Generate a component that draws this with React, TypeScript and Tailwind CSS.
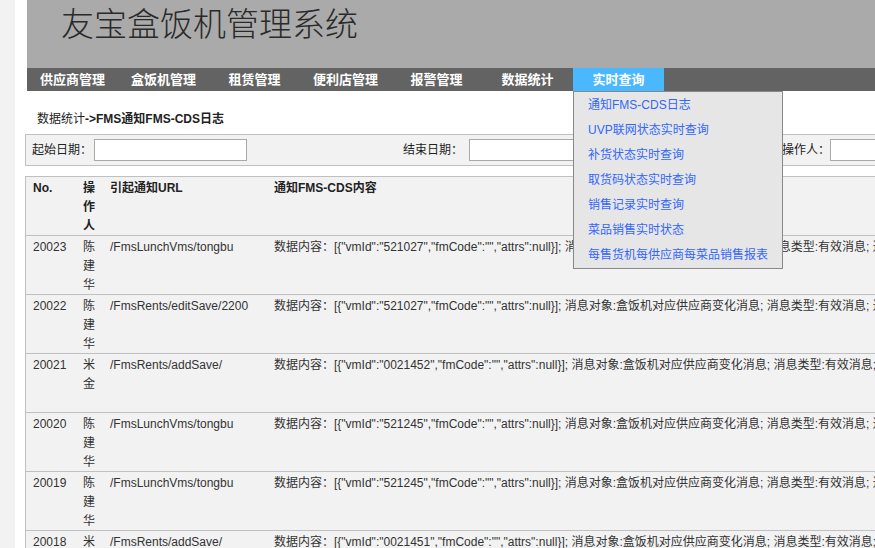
import React from "react";

const navItems = ["供应商管理", "盒饭机管理", "租赁管理", "便利店管理", "报警管理", "数据统计", "实时查询"];

const menuItems = [
  "通知FMS-CDS日志",
  "UVP联网状态实时查询",
  "补货状态实时查询",
  "取货码状态实时查询",
  "销售记录实时查询",
  "菜品销售实时状态",
  "每售货机每供应商每菜品销售报表",
];

const rows = [
  { no: "20023", op: "陈建华", url: "/FmsLunchVms/tongbu", vm: "521027" },
  { no: "20022", op: "陈建华", url: "/FmsRents/editSave/2200", vm: "521027" },
  { no: "20021", op: "米金", url: "/FmsRents/addSave/", vm: "0021452" },
  { no: "20020", op: "陈建华", url: "/FmsLunchVms/tongbu", vm: "521245" },
  { no: "20019", op: "陈建华", url: "/FmsLunchVms/tongbu", vm: "521245" },
  { no: "20018", op: "米金", url: "/FmsRents/addSave/", vm: "0021451" },
];

const font = { fontFamily: '"Liberation Sans", "Noto Sans CJK SC", sans-serif' };

export default function App() {
  return (
    <div className="w-[875px] h-[548px] overflow-hidden flex bg-white text-[#333]" style={font}>
      {/* left strip */}
      <div className="w-[15px] shrink-0 bg-[#f2f2f2]" />

      <div className="w-[1140px] shrink-0 pl-[10px]">
        <div className="relative">
          {/* header */}
          <div className="ml-[2px] h-[68px] bg-[#aaaaaa] pl-[34px] pt-[8px]">
            <h1 className="text-[33px] leading-none font-light text-[#2a2a2a]">友宝盒饭机管理系统</h1>
          </div>
          <div className="ml-[2px] h-[23px] bg-[#636363] flex">
            {navItems.map((n, i) => (
              <div
                key={n}
                className={`w-[91px] text-center text-[13px] leading-[23px] font-bold text-white ${
                  i === 6 ? "bg-[#4ab8ff]" : ""
                }`}
              >
                {n}
              </div>
            ))}
          </div>

          {/* dropdown menu */}
          <div className="absolute left-[548px] top-[91px] z-10 w-[210px] bg-[#e6e6e6] border border-[#888] pl-[14px] pt-[1px]">
            {menuItems.map((m) => (
              <div key={m} className="h-[25px] leading-[25px] text-[12px] text-[#3366ff] whitespace-nowrap">
                {m}
              </div>
            ))}
          </div>

          {/* breadcrumb */}
          <div className="pl-[12px] pt-[20px] pb-[7px] text-[12px] leading-[16px] text-[#222]">
            数据统计<span className="font-bold">-&gt;FMS通知FMS-CDS日志</span>
          </div>

          {/* filters */}
          <div className="h-[32px] border border-[#c0c0c0] bg-[#f2f2f2] flex items-center text-[12px] text-[#222]">
            <div className="w-[377px] pl-[6px] flex items-center">
              <span className="w-[62px]">起始日期：</span>
              <input className="w-[153px] h-[22px] border border-[#a9a9a9] bg-white" />
            </div>
            <div className="w-[379px] flex items-center">
              <span className="w-[66px]">结束日期：</span>
              <input className="w-[153px] h-[22px] border border-[#a9a9a9] bg-white" />
            </div>
            <div className="flex items-center">
              <span className="w-[48px]">操作人：</span>
              <input className="w-[153px] h-[22px] border border-[#a9a9a9] bg-white" />
            </div>
          </div>

          {/* table */}
          <div className="mt-[10px] border-l border-t border-[#c0c0c0] bg-[#f2f2f2] text-[12px] leading-[19px]">
            <div className="flex h-[59px] border-b border-[#c0c0c0] font-bold text-[#222]">
              <div className="w-[50px] shrink-0 pl-[7px] pt-[2px]">No.</div>
              <div className="w-[27px] shrink-0 pl-[7px] pt-[2px]">操作人</div>
              <div className="w-[164px] shrink-0 pl-[7px] pt-[2px]">引起通知URL</div>
              <div className="pl-[7px] pt-[2px]">通知FMS-CDS内容</div>
            </div>
            {rows.map((r) => (
              <div key={r.no} className="flex h-[59px] border-b border-[#c0c0c0]">
                <div className="w-[50px] shrink-0 pl-[7px] pt-[2px]">{r.no}</div>
                <div className="w-[27px] shrink-0 pl-[7px] pt-[2px]">{r.op}</div>
                <div className="w-[164px] shrink-0 pl-[7px] pt-[2px]">{r.url}</div>
                <div className="pl-[7px] pt-[2px] whitespace-nowrap">
                  数据内容：{`[{"vmId":"${r.vm}","fmCode":"","attrs":null}]`}; 消息对象:盒饭机对应供应商变化消息; 消息类型:有效消息; 通知结果:成功
                </div>
              </div>
            ))}
          </div>
        </div>
      </div>
    </div>
  );
}
